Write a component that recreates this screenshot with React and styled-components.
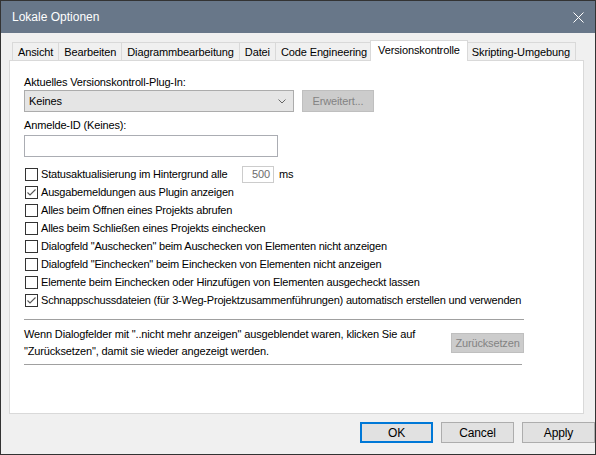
import React from "react";
import styled, { createGlobalStyle } from "styled-components";

const GlobalStyle = createGlobalStyle`
  html, body { margin: 0; padding: 0; background: #ffffff; }
  body {
    font-family: "Liberation Sans", Arial, sans-serif;
    font-size: 11px;
    color: #000;
  }
  * { box-sizing: border-box; }
`;

const Window = styled.div`
  width: 596px;
  height: 455px;
  border: 1px solid #333333;
  background: #f0f0f0;
  display: flex;
  flex-direction: column;
  overflow: hidden;
`;

const TitleBar = styled.div`
  height: 32px;
  flex: none;
  background: #687789;
  color: #ffffff;
  display: flex;
  align-items: center;
  justify-content: space-between;
  padding: 0 11px 0 11px;
  font-size: 12px;
`;

const Body = styled.div`
  flex: 1;
  display: flex;
  flex-direction: column;
  padding: 7px 0 0 8px;
`;

const TabStrip = styled.div`
  display: flex;
  align-items: flex-end;
  height: 21px;
  padding-left: 3px;
  margin-bottom: -1px;
  position: relative;
  z-index: 1;
`;

const Tab = styled.div`
  position: relative;
  height: ${(p) => (p.$active ? "21px" : "19px")};
  padding: ${(p) => (p.$active ? "0 7px 2px" : "0 5px")};
  margin: ${(p) => (p.$active ? "0 -2px 0 -2px" : "0 -1px 0 0")};
  z-index: ${(p) => (p.$active ? 2 : 1)};
  background: ${(p) => (p.$active ? "#ffffff" : "#f0f0f0")};
  border: 1px solid #d9d9d9;
  border-bottom: ${(p) => (p.$active ? "none" : "1px solid #d9d9d9")};
  display: flex;
  align-items: center;
  white-space: nowrap;
  letter-spacing: -0.12px;
`;

const Panel = styled.div`
  height: 354px;
  margin-right: 11px;
  background: #ffffff;
  border: 1px solid #d9d9d9;
  padding: 14px 0 0 14px;
  display: flex;
  flex-direction: column;
  align-items: flex-start;
`;

const Label = styled.div`
  line-height: 14px;
  height: 14px;
  margin-top: ${(p) => p.$mt || 0}px;
  letter-spacing: -0.15px;
  white-space: nowrap;
`;

const Row = styled.div`
  display: flex;
  align-items: center;
  gap: ${(p) => p.$gap || 0}px;
  margin-top: ${(p) => p.$mt || 0}px;
`;

const Select = styled.div`
  width: 270px;
  height: 22px;
  background: #e5e5e5;
  border: 1px solid #acacac;
  display: flex;
  align-items: center;
  justify-content: space-between;
  padding: 0 7px 0 4px;
  letter-spacing: -0.15px;
`;

const Button = styled.div`
  width: ${(p) => p.$w || 73}px;
  height: ${(p) => p.$h || 21}px;
  display: flex;
  align-items: center;
  justify-content: center;
  background: ${(p) => (p.$disabled ? "#cccccc" : "#e1e1e1")};
  border: ${(p) =>
    p.$default ? "2px solid #0078d7" : p.$disabled ? "1px solid #bfbfbf" : "1px solid #adadad"};
  color: ${(p) => (p.$disabled ? "#838383" : "#000000")};
  letter-spacing: -0.15px;
  font-size: ${(p) => (p.$big ? "12px" : "11px")};
  flex: none;
`;

const TextBox = styled.div`
  width: ${(p) => p.$w}px;
  height: ${(p) => p.$h}px;
  background: #ffffff;
  border: 1px solid ${(p) => p.$border || "#abadb3"};
  margin-top: ${(p) => p.$mt || 0}px;
  display: flex;
  align-items: center;
  justify-content: flex-end;
  padding-right: 3px;
  color: #6d6d6d;
  letter-spacing: -0.15px;
`;

const CheckList = styled.div`
  margin-top: 8px;
  display: flex;
  flex-direction: column;
`;

const CheckRow = styled.div`
  height: 18px;
  display: flex;
  align-items: center;
  padding-left: 1px;
`;

const Box = styled.span`
  width: 13px;
  height: 13px;
  border: 1px solid #333333;
  background: #ffffff;
  flex: none;
  display: flex;
  align-items: center;
  justify-content: center;
  margin-right: 3px;
`;

const CheckText = styled.span`
  white-space: nowrap;
  letter-spacing: -0.2px;
  min-width: ${(p) => (p.$minW ? `${p.$minW}px` : "auto")};
`;

const Unit = styled.span`
  margin-left: 5px;
  letter-spacing: -0.15px;
`;

const Separator = styled.div`
  width: ${(p) => p.$w}px;
  height: 1px;
  background: #a0a0a0;
  margin-top: ${(p) => p.$mt}px;
`;

const InfoRow = styled.div`
  width: 500px;
  margin-top: 6px;
  display: flex;
  align-items: center;
  justify-content: space-between;
`;

const InfoText = styled.div`
  line-height: 17px;
  letter-spacing: -0.15px;
  white-space: nowrap;
`;

const Footer = styled.div`
  display: flex;
  justify-content: flex-end;
  gap: 8px;
  margin-top: 8px;
`;

const CloseIcon = () => (
  <svg width="11" height="11" viewBox="0 0 11 11">
    <path d="M0.5 0.5 L10.5 10.5 M10.5 0.5 L0.5 10.5" stroke="#ffffff" strokeWidth="1" />
  </svg>
);

const Chevron = () => (
  <svg width="8" height="5" viewBox="0 0 8 5">
    <path d="M0.5 0.5 L4 4 L7.5 0.5" fill="none" stroke="#666" strokeWidth="1" />
  </svg>
);

const CheckMark = () => (
  <svg width="11" height="11" viewBox="0 0 11 11">
    <path d="M1.5 5.5 L4 8 L9.5 2.5" fill="none" stroke="#555" strokeWidth="1.1" />
  </svg>
);

const Check = ({ checked, children, minW, extra }) => (
  <CheckRow>
    <Box>{checked && <CheckMark />}</Box>
    <CheckText $minW={minW}>{children}</CheckText>
    {extra}
  </CheckRow>
);

const tabs = [
  "Ansicht",
  "Bearbeiten",
  "Diagrammbearbeitung",
  "Datei",
  "Code Engineering",
  "Versionskontrolle",
  "Skripting-Umgebung",
];

export default function App() {
  return (
    <>
      <GlobalStyle />
      <Window>
        <TitleBar>
          <span>Lokale Optionen</span>
          <CloseIcon />
        </TitleBar>
        <Body>
          <TabStrip>
            {tabs.map((t) => (
              <Tab key={t} $active={t === "Versionskontrolle"}>
                {t}
              </Tab>
            ))}
          </TabStrip>
          <Panel>
            <Label>Aktuelles Versionskontroll-Plug-In:</Label>
            <Row $gap={8} $mt={1}>
              <Select>
                <span>Keines</span>
                <Chevron />
              </Select>
              <Button $disabled $w={72} $h={22}>
                Erweitert...
              </Button>
            </Row>
            <Label $mt={6}>Anmelde-ID (Keines):</Label>
            <TextBox $w={254} $h={22} $mt={3} />
            <CheckList>
              <Check
                minW={201}
                extra={
                  <>
                    <TextBox $w={32} $h={17} $border="#cccccc">500</TextBox>
                    <Unit>ms</Unit>
                  </>
                }
              >
                Statusaktualisierung im Hintergrund alle
              </Check>
              <Check checked>Ausgabemeldungen aus Plugin anzeigen</Check>
              <Check>Alles beim Öffnen eines Projekts abrufen</Check>
              <Check>Alles beim Schließen eines Projekts einchecken</Check>
              <Check>Dialogfeld "Auschecken" beim Auschecken von Elementen nicht anzeigen</Check>
              <Check>Dialogfeld "Einchecken" beim Einchecken von Elementen nicht anzeigen</Check>
              <Check>Elemente beim Einchecken oder Hinzufügen von Elementen ausgecheckt lassen</Check>
              <Check checked>
                Schnappschussdateien (für 3-Weg-Projektzusammenführungen) automatisch erstellen und verwenden
              </Check>
            </CheckList>
            <Separator $w={500} $mt={10} />
            <InfoRow>
              <InfoText>
                Wenn Dialogfelder mit "..nicht mehr anzeigen" ausgeblendet waren, klicken Sie auf
                <br />
                "Zurücksetzen", damit sie wieder angezeigt werden.
              </InfoText>
              <Button $disabled $w={73} $h={20}>
                Zurücksetzen
              </Button>
            </InfoRow>
            <Separator $w={498} $mt={4} />
          </Panel>
          <Footer>
            <Button $default $big>OK</Button>
            <Button $big>Cancel</Button>
            <Button $big>Apply</Button>
          </Footer>
        </Body>
      </Window>
    </>
  );
}
